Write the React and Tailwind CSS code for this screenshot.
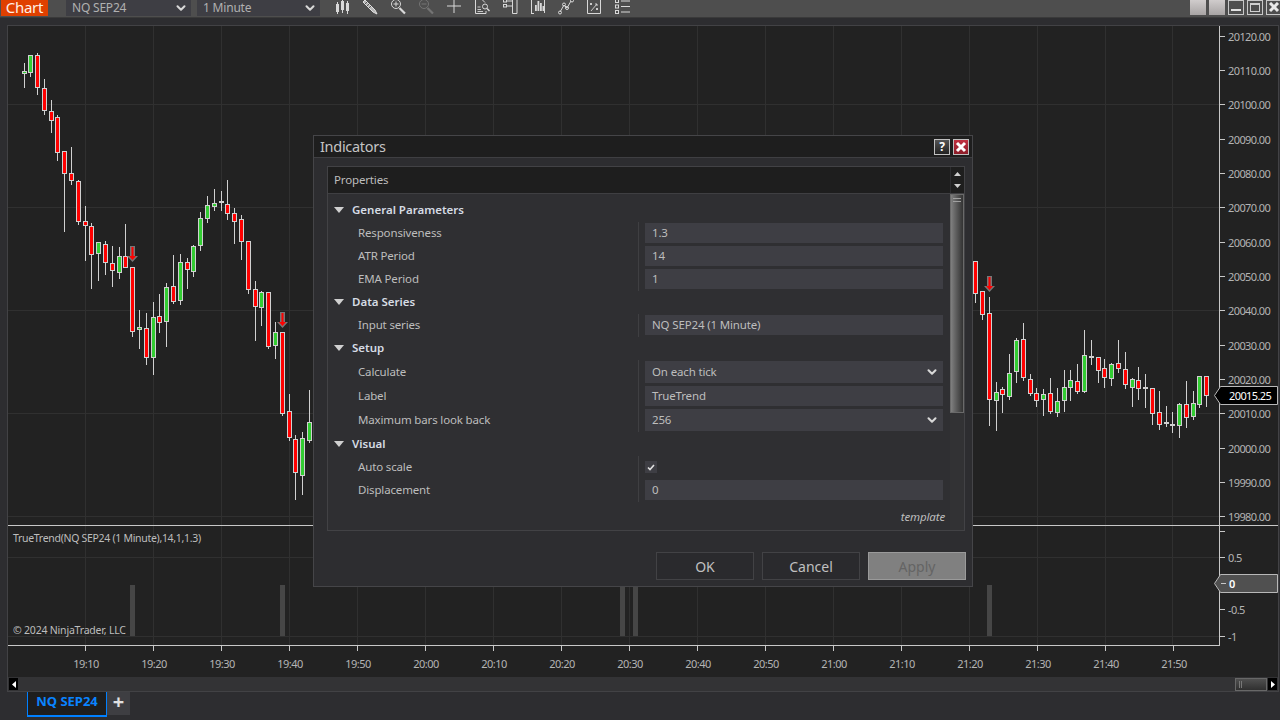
import { ChevronDown } from "lucide-react";

const R = "#ff0000";
const G = "#32cd32";
const N = "#d0d0d0";

// x, wick top, body top, body bottom, wick bottom, colour
const candles = [
  [24, 63, 71, 73, 87, G],
  [30, 55, 55, 72, 76, G],
  [37, 53, 55, 87, 94, R],
  [44, 79, 88, 110, 114, R],
  [51, 100, 111, 120, 132, R],
  [57, 115, 117, 152, 160, R],
  [64, 151, 151, 173, 231, R],
  [71, 147, 173, 180, 184, R],
  [78, 180, 181, 221, 224, R],
  [85, 206, 221, 225, 260, R],
  [91, 223, 226, 254, 288, R],
  [98, 242, 242, 253, 280, G],
  [105, 241, 244, 262, 274, R],
  [112, 246, 263, 270, 286, R],
  [119, 247, 256, 272, 278, G],
  [125, 224, 256, 267, 267, R],
  [132, 267, 267, 331, 336, R],
  [139, 310, 327, 329, 348, G],
  [146, 313, 328, 357, 364, R],
  [153, 302, 317, 357, 374, G],
  [159, 294, 316, 322, 332, R],
  [166, 283, 287, 321, 346, G],
  [173, 255, 286, 301, 303, R],
  [180, 254, 262, 300, 304, G],
  [187, 258, 262, 269, 288, R],
  [193, 245, 246, 271, 276, G],
  [200, 212, 218, 245, 250, G],
  [207, 196, 205, 218, 222, G],
  [214, 189, 203, 206, 210, G],
  [221, 191, 201, 202, 210, N],
  [227, 180, 204, 213, 219, R],
  [234, 208, 213, 221, 243, R],
  [241, 215, 219, 241, 259, R],
  [248, 241, 241, 289, 293, R],
  [255, 281, 289, 306, 340, R],
  [261, 291, 292, 307, 325, G],
  [268, 292, 292, 346, 348, R],
  [275, 322, 332, 345, 358, G],
  [282, 332, 332, 413, 415, R],
  [289, 394, 411, 437, 440, R],
  [295, 435, 439, 472, 499, R],
  [302, 432, 438, 475, 494, G],
  [309, 390, 422, 440, 442, G],
  [975, 261, 261, 293, 302, R],
  [982, 291, 291, 314, 319, R],
  [989, 297, 313, 399, 425, R],
  [996, 382, 392, 400, 430, G],
  [1002, 387, 389, 394, 412, R],
  [1009, 354, 373, 396, 399, G],
  [1016, 338, 340, 371, 382, G],
  [1023, 323, 339, 377, 380, R],
  [1030, 374, 379, 393, 395, R],
  [1036, 388, 393, 400, 406, R],
  [1043, 389, 394, 399, 415, G],
  [1050, 378, 393, 411, 413, R],
  [1057, 388, 401, 412, 416, G],
  [1064, 370, 387, 400, 411, G],
  [1070, 370, 380, 387, 400, G],
  [1077, 364, 381, 391, 393, R],
  [1084, 330, 355, 391, 392, G],
  [1091, 340, 356, 357, 364, N],
  [1098, 357, 357, 370, 382, R],
  [1104, 359, 368, 377, 387, R],
  [1111, 363, 364, 378, 385, G],
  [1118, 340, 363, 368, 372, R],
  [1125, 352, 369, 384, 388, R],
  [1132, 378, 379, 387, 406, G],
  [1138, 367, 380, 388, 399, R],
  [1145, 374, 387, 388, 407, N],
  [1152, 388, 388, 413, 424, R],
  [1159, 391, 412, 424, 429, R],
  [1166, 406, 422, 423, 426, N],
  [1172, 412, 424, 425, 432, N],
  [1179, 403, 404, 425, 437, G],
  [1186, 381, 404, 417, 427, R],
  [1193, 391, 403, 416, 419, G],
  [1199, 376, 376, 404, 407, G],
  [1206, 376, 376, 395, 406, R],
];

const gridX = [85, 153, 221, 289, 357, 425, 493, 561, 629, 697, 765, 833, 901, 969, 1037, 1105, 1172];
const times = ["19:10", "19:20", "19:30", "19:40", "19:50", "20:00", "20:10", "20:20", "20:30", "20:40", "20:50", "21:00", "21:10", "21:20", "21:30", "21:40", "21:50"];
const prices = ["20120.00", "20110.00", "20100.00", "20090.00", "20080.00", "20070.00", "20060.00", "20050.00", "20040.00", "20030.00", "20020.00", "20010.00", "20000.00", "19990.00", "19980.00"];

const Arrow = ({ x, y }) => (
  <g>
    <rect x={x - 2} y={y} width="5" height="11" fill="#777777" />
    <polygon points={`${x - 5},${y + 10} ${x + 6},${y + 10} ${x + 0.5},${y + 16}`} fill="#777777" />
    <rect x={x - 0.5} y={y + 1} width="2" height="9" fill={R} />
    <polygon points={`${x - 3},${y + 10} ${x + 4},${y + 10} ${x + 0.5},${y + 14}`} fill={R} />
  </g>
);

const Candle = ({ c }) => {
  const [x, top, bt, bb, bot, col] = c;
  return (
    <g shapeRendering="crispEdges">
      <rect x={x} y={top} width="1" height={bot - top + 1} fill="#d0d0d0" />
      <rect x={x - 1.5} y={bt + 0.5} width="4" height={Math.max(bb - bt, 1)} fill={col} stroke="#d0d0d0" strokeWidth="1" />
    </g>
  );
};

const PriceChart = () => (
  <svg viewBox="8 26 1211 499" width="1211" height="499" className="block">
    <g shapeRendering="crispEdges" fill="#303030">
      {gridX.map((x) => <rect key={x} x={x} y="26" width="1" height="499" />)}
      {[104, 207, 310, 413, 516].map((y) => <rect key={y} x="8" y={y} width="1211" height="1" />)}
    </g>
    {candles.map((c) => <Candle key={c[0]} c={c} />)}
    <Arrow x={132} y={246} />
    <Arrow x={282} y={312} />
    <Arrow x={989} y={276} />
  </svg>
);

const IndicatorChart = () => (
  <svg viewBox="8 526 1211 119" width="1211" height="119" className="block">
    <g shapeRendering="crispEdges" fill="#303030">
      {gridX.map((x) => <rect key={x} x={x} y="526" width="1" height="119" />)}
      {[557, 636].map((y) => <rect key={y} x="8" y={y} width="1211" height="1" />)}
    </g>
    <g shapeRendering="crispEdges" fill="#464646">
      {[130, 280, 620, 633, 987].map((x) => <rect key={x} x={x} y="585" width="5" height="51" />)}
    </g>
  </svg>
);

const AxisLabel = ({ text, h = "h-[14px]" }) => (
  <div className={`flex items-center ${h}`}>
    <div className="w-[5px] h-px bg-[#c8c8c8] mr-[3px]" />
    <span className="text-[11px] leading-none text-[#b4b4b4] tracking-[-0.6px]">{text}</span>
  </div>
);

const Badge = ({ text, fill, tick, className }) => (
  <div className={`absolute left-[-6px] w-[64px] h-[19px] flex items-center ${className}`}>
    <svg width="64" height="19" className="absolute left-0 top-0">
      <polygon points="0.5,9.5 6.5,0.5 63.5,0.5 63.5,18.5 6.5,18.5" fill={fill} stroke="#b8b8b8" />
    </svg>
    {tick && <div className="absolute left-[7px] top-[9px] w-[5px] h-px bg-[#c8c8c8]" />}
    <span className={`relative ml-[15px] text-[11px] leading-none text-white tracking-[-0.6px] ${tick ? "font-semibold" : ""}`}>{text}</span>
  </div>
);

const Section = ({ text }) => (
  <div className="flex items-center h-[23px] pb-px">
    <svg width="12" height="7" className="ml-[5px] mr-[7px]">
      <polygon points="1,0 11,0 6,6" fill="#d0d0d0" />
    </svg>
    <span className="text-[11.5px] font-semibold text-[#d6dce4]">{text}</span>
  </div>
);

const Row = ({ label, tall, children }) => (
  <div className={`flex ${tall ? "h-[24px]" : "h-[23px]"}`}>
    <div className={`w-[310px] flex items-center pl-[30px] text-[11.5px] tracking-[-0.15px] text-[#bdbdbd] ${tall ? "" : "pb-px"}`}>{label}</div>
    <div className={`flex-1 flex border-l border-[#3f3f42] pl-[6px] ${tall ? "items-center" : "items-start pt-px"}`}>{children}</div>
  </div>
);

const Input = ({ value }) => (
  <div className="w-[298px] h-[20px] bg-[#3e3e44] px-[7px] flex items-center text-[11.5px] tracking-[-0.15px] text-[#bdbdbd]">{value}</div>
);

const Combo = ({ value }) => (
  <div className="w-[298px] h-[22px] bg-[#3e3e44] pl-[7px] pr-[4px] flex items-center justify-between text-[11.5px] tracking-[-0.15px] text-[#bdbdbd]">
    {value}
    <ChevronDown size={14} strokeWidth={3.5} className="text-[#d8d8d8]" />
  </div>
);

const Btn = ({ children, className }) => (
  <div className={`w-[98px] h-[28px] flex items-center justify-center text-[14px] border ${className}`}>{children}</div>
);

const ico = "w-4 h-4 shrink-0";

const ToolIcons = () => (
  <div className="flex items-center gap-3 ml-[14px] mt-[-1px]">
    <svg viewBox="0 0 16 16" className={ico} fill="#d8d8d8">
      <rect x="2" y="5" width="3" height="8" /><rect x="3" y="3" width="1" height="12" />
      <rect x="7" y="2" width="3" height="9" /><rect x="8" y="0" width="1" height="14" />
      <rect x="12" y="4" width="3" height="8" /><rect x="13" y="2" width="1" height="13" />
    </svg>
    <svg viewBox="0 0 16 16" className={ico} fill="none">
      <path d="M1 3 L3 1 L13 11 L15 15 L11 13 Z" fill="#b8b8b8" stroke="#e0e0e0" />
      <path d="M3 5 L5 3 M5 7 L7 5 M7 9 L9 7" stroke="#555" />
    </svg>
    <svg viewBox="0 0 16 16" className={ico} fill="none" stroke="#d8d8d8">
      <circle cx="6" cy="5" r="4.5" /><path d="M6 2.5 V7.5 M3.5 5 H8.5" />
      <path d="M9.5 9 L15 14.5" strokeWidth="2.2" />
    </svg>
    <svg viewBox="0 0 16 16" className={ico} fill="none" stroke="#747474">
      <circle cx="6" cy="5" r="4.5" /><path d="M3.5 5 H8.5" />
      <path d="M9.5 9 L15 14.5" strokeWidth="2.2" />
    </svg>
    <svg viewBox="0 0 16 16" className={ico} fill="none" stroke="#d8d8d8">
      <path d="M8 0 V14 M1 7 H15" />
    </svg>
    <svg viewBox="0 0 16 16" className={ico} fill="none" stroke="#d8d8d8">
      <path d="M8 0.5 H1.5 V14.5 H12 V12 M8 0.5 L11 3.5" />
      <path d="M3.5 8 H6.5 M3.5 10.5 H7 M3.5 12.5 H9" strokeWidth="0.9" />
      <circle cx="11" cy="7.5" r="2.5" /><path d="M13 9.5 L15.5 12" strokeWidth="1.5" />
    </svg>
    <svg viewBox="0 0 16 16" className={ico} fill="none" stroke="#d8d8d8">
      <rect x="1.5" y="0.5" width="3" height="2.5" /><rect x="1.5" y="5.5" width="3" height="2.5" />
      <path d="M4.5 2 H10 M4.5 7 H10" />
      <path d="M10.5 0 H15 V14.5 H10.5 Z" />
    </svg>
    <svg viewBox="0 0 16 16" className={ico} fill="#d8d8d8" stroke="none">
      <rect x="5" y="6" width="1.8" height="6" /><rect x="7.5" y="2" width="1.8" height="10" />
      <rect x="10" y="4" width="1.8" height="8" /><rect x="12.5" y="7" width="1.8" height="5" />
      <path d="M1 0 H3 V1 H2 V14 H4 V15 H1 Z M13 14 H15 V0 H14 V14 Z" />
    </svg>
    <svg viewBox="0 0 16 16" className={ico} fill="none" stroke="#d8d8d8">
      <path d="M2 13 L6 6 L9 9 L13 2" />
      <circle cx="2" cy="13.5" r="1.5" /><circle cx="6" cy="5.5" r="1.5" />
      <circle cx="9" cy="9" r="1.5" /><circle cx="14" cy="1.5" r="1.5" />
    </svg>
    <svg viewBox="0 0 16 16" className={ico} fill="none" stroke="#d8d8d8">
      <path d="M1.5 0.5 H14.5 V14.5 H1.5 Z" />
      <path d="M4 4 L6 6 M6 4 L4 6 M10 9 L12 11 M12 9 L10 11 M5 12 L11 5 M9 5 H11 V7" strokeWidth="0.9" />
    </svg>
    <svg viewBox="0 0 16 16" className={ico} fill="none" stroke="#d8d8d8">
      <rect x="1.5" y="0.5" width="3" height="3" /><rect x="1.5" y="6" width="3" height="3" />
      <rect x="1.5" y="11.5" width="3" height="3" />
      <path d="M7 2 H16 M7 7.5 H16 M7 13 H16" />
    </svg>
  </div>
);

const Toolbar = () => (
  <div className="h-[17px] bg-[#4e4e4e] flex items-start overflow-hidden">
    <div className="ml-px w-[47px] h-[16px] bg-[#e04000] text-[#fff0e6] text-[15px] leading-[15px] text-center tracking-[-0.3px]">Chart</div>
    <div className="ml-[18px] w-[125px] h-[16px] bg-[#3e3e44] pl-[6px] pr-[3px] flex items-center justify-between text-[12px] tracking-[-0.2px] text-[#b0b0b0]">
      NQ SEP24
      <ChevronDown size={14} strokeWidth={3.5} className="text-[#d8d8d8]" />
    </div>
    <div className="ml-[6px] w-[123px] h-[16px] bg-[#3e3e44] pl-[6px] pr-[3px] flex items-center justify-between text-[12px] tracking-[-0.2px] text-[#b0b0b0]">
      1 Minute
      <ChevronDown size={14} strokeWidth={3.5} className="text-[#d8d8d8]" />
    </div>
    <ToolIcons />
    <div className="ml-auto flex gap-[3px] mr-[-2px]">
      <div className="w-4 h-[15px] bg-gradient-to-b from-[#d0cccc] to-[#a8a4a4]" />
      <div className="w-4 h-[15px] bg-gradient-to-b from-[#d0cccc] to-[#a8a4a4]" />
      <div className="w-4 h-[15px] border border-[#c8c8c8] flex items-end justify-center pb-[3px]">
        <div className="w-[10px] h-[2px] bg-[#e0e0e0]" />
      </div>
      <div className="w-4 h-[15px] border border-[#c8c8c8] p-[2px]">
        <div className="w-full h-full border border-[#d0d0d0] border-t-2" />
      </div>
      <div className="w-4 h-[15px] border border-[#c8c8c8] flex items-center justify-center">
        <svg width="12" height="11" viewBox="0 0 12 11"><path d="M2 1 L10 9 M10 1 L2 9" stroke="#e8e8e8" strokeWidth="3" /></svg>
      </div>
    </div>
  </div>
);

const Dialog = () => (
  <div className="absolute left-[313px] top-[135px] w-[660px] h-[452px] bg-[#2d2d30] border border-[#454548] flex flex-col">
    <div className="h-[22px] bg-[#1e1e1e] border-b border-[#3f3f42] flex items-center pl-[6px] pr-[3px] shrink-0">
      <span className="text-[14.5px] tracking-[-0.3px] text-[#c4c4c4]">Indicators</span>
      <div className="ml-auto flex gap-[3px]">
        <div className="w-4 h-4 border border-[#c0c0c0] bg-gradient-to-b from-[#555] to-[#222] flex items-center justify-center text-white text-[12px] font-bold leading-none">?</div>
        <div className="w-4 h-4 border border-[#c0c0c0] bg-gradient-to-b from-[#c03040] to-[#8c1c28] flex items-center justify-center">
          <svg width="12" height="12" viewBox="0 0 12 12"><path d="M2 2 L10 10 M10 2 L2 10" stroke="#ffffff" strokeWidth="3" /></svg>
        </div>
      </div>
    </div>
    <div className="mt-[8px] ml-[13px] mr-[7px] h-[365px] border border-[#424245] bg-[#2f2f32] flex flex-col shrink-0">
      <div className="h-[27px] bg-[#1e1e1e] border-b border-[#3f3f42] flex shrink-0">
        <span className="flex-1 pl-[6px] text-[11.5px] tracking-[-0.15px] text-[#bdbdbd] leading-[26px]">Properties</span>
        <div className="w-[14px] flex flex-col items-center justify-center gap-[8px] border-l border-[#2d2d30]">
          <svg width="7" height="4"><polygon points="3.5,0 7,4 0,4" fill="#d0d0d0" /></svg>
          <svg width="7" height="4"><polygon points="0,0 7,0 3.5,4" fill="#d0d0d0" /></svg>
        </div>
      </div>
      <div className="flex flex-1 min-h-0">
        <div className="flex-1 pt-[5px] flex flex-col">
          <Section text="General Parameters" />
          <Row label="Responsiveness"><Input value="1.3" /></Row>
          <Row label="ATR Period"><Input value="14" /></Row>
          <Row label="EMA Period"><Input value="1" /></Row>
          <Section text="Data Series" />
          <Row label="Input series"><Input value="NQ SEP24 (1 Minute)" /></Row>
          <Section text="Setup" />
          <Row label="Calculate" tall><Combo value="On each tick" /></Row>
          <Row label="Label" tall><Input value="TrueTrend" /></Row>
          <Row label="Maximum bars look back" tall><Combo value="256" /></Row>
          <div className="h-[24px] flex items-end"><Section text="Visual" /></div>
          <Row label="Auto scale">
            <div className="w-3 h-3 mt-[4px] bg-[#3e3e44] flex items-center justify-center">
              <svg width="8" height="7" viewBox="0 0 8 7"><path d="M1 3.5 L3 5.5 L7 1" fill="none" stroke="#e0e0e0" strokeWidth="1.6" /></svg>
            </div>
          </Row>
          <Row label="Displacement"><Input value="0" /></Row>
          <div className="mt-[6px] pr-[5px] text-right text-[11.5px] tracking-[-0.15px] italic text-[#bdbdbd]">template</div>
        </div>
        <div className="w-[14px] bg-[#323234]">
          <div className="h-[219px] border border-[#6a6a6a] bg-gradient-to-r from-[#808080] to-[#333333] flex flex-col items-center gap-[2px] pt-[3px]">
            <div className="w-2 h-px bg-[#a0a0a0]" />
            <div className="w-2 h-px bg-[#a0a0a0]" />
          </div>
        </div>
      </div>
    </div>
    <div className="mt-[21px] mr-[6px] flex justify-end gap-2 shrink-0">
      <Btn className="border-[#424245] bg-[#2a2a2d] text-[#c0c0c0]">OK</Btn>
      <Btn className="border-[#424245] bg-[#2a2a2d] text-[#c0c0c0]">Cancel</Btn>
      <Btn className="border-[#9a9a9a] bg-[#808080] text-[#646464]">Apply</Btn>
    </div>
  </div>
);

export default function App() {
  return (
    <div className="relative w-[1280px] h-[720px] overflow-hidden bg-[#2d2d30] font-['Noto_Sans',sans-serif] flex flex-col">
      <Toolbar />
      <div className="h-px bg-[#3a3a3a]" />
      <div className="h-[7px]" />

      {/* chart frame */}
      <div className="ml-[7px] mr-px h-[667px] border border-[#424245] bg-[#222222] flex flex-col shrink-0">
        <div className="flex h-[499px]">
          <PriceChart />
          <div className="relative flex-1 border-l border-[#c8c8c8] flex flex-col justify-between pt-[3px] pb-px">
            {prices.map((p) => <AxisLabel key={p} text={p} />)}
            <Badge text="20015.25" fill="#000000" className="top-[360px]" />
          </div>
        </div>
        <div className="h-px bg-[#c8c8c8]" />
        <div className="flex h-[119px]">
          <div className="relative w-[1211px]">
            <IndicatorChart />
            <span className="absolute left-[5px] top-[5px] text-[10.5px] tracking-[-0.3px] text-[#bdbdbd]">TrueTrend(NQ SEP24 (1 Minute),14,1,1.3)</span>
            <span className="absolute left-[5px] top-[97px] text-[10.5px] tracking-[-0.2px] text-[#bdbdbd]">© 2024 NinjaTrader, LLC</span>
          </div>
          <div className="relative flex-1 border-l border-[#c8c8c8] flex flex-col justify-between pb-[4px]">
            <AxisLabel text="" h="h-[10px]" />
            <AxisLabel text="0.5" h="h-[10px]" />
            <AxisLabel text="" h="h-[10px]" />
            <AxisLabel text="-0.5" h="h-[10px]" />
            <AxisLabel text="-1" h="h-[10px]" />
            <Badge text="0" fill="#505050" tick className="top-[48px]" />
          </div>
        </div>
        <div className="w-[1212px] h-px bg-[#c8c8c8]" />
        <div className="h-[31px] flex pl-[43px]">
          {times.map((t) => (
            <div key={t} className="w-[68px] shrink-0">
              <div className="ml-[34px] w-px h-[5px] bg-[#c8c8c8]" />
              <div className="mt-[6px] pl-[2px] text-center text-[11px] leading-[14px] text-[#b4b4b4] tracking-[-0.5px]">{t}</div>
            </div>
          ))}
        </div>
        <div className="flex-1 bg-[#333335] flex items-center">
          <div className="ml-px w-[9px] h-[12px] bg-black flex items-center justify-center">
            <svg width="4" height="7"><polygon points="0,3.5 4,0 4,7" fill="#ffffff" /></svg>
          </div>
          <div className="ml-auto w-[32px] h-[13px] border border-[#686868] bg-gradient-to-b from-[#505050] to-[#303030] pl-[3px] flex gap-px">
            <div className="w-px h-[7px] mt-[2px] bg-[#777]" />
            <div className="w-px h-[7px] mt-[2px] bg-[#777]" />
          </div>
          <div className="ml-px mr-px w-[9px] h-[12px] bg-black flex items-center justify-center">
            <svg width="4" height="7"><polygon points="4,3.5 0,0 0,7" fill="#ffffff" /></svg>
          </div>
        </div>
      </div>

      {/* tabs */}
      <div className="flex items-start pl-[27px]">
        <div className="w-[80px] h-[25px] pb-[4px] bg-[#1e1e1e] border-x border-b-2 border-[#0080ff] text-[#0a84ff] text-[13px] font-bold flex items-center justify-center">NQ SEP24</div>
        <div className="w-[23px] h-[23px] pb-[3px] bg-[#3e3e42] flex items-center justify-center text-[#e0e0e0] text-[20px] font-bold leading-none">+</div>
      </div>

      <Dialog />
    </div>
  );
}
